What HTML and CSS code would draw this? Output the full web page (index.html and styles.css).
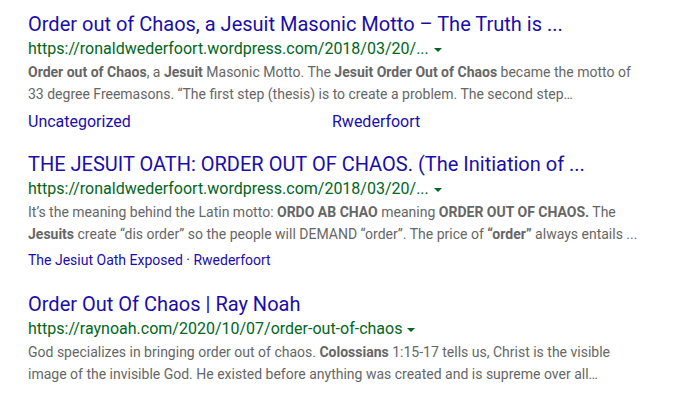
FILE: index.html
```html
<!DOCTYPE html>
<html>
<head>
<meta charset="utf-8">
<link rel="stylesheet" href="styles.css">
</head>
<body>
<div class="results">
  <div class="result r1">
    <h3 class="title">Order out of Chaos, a Jesuit Masonic Motto – The Truth is ...</h3>
    <div class="url">https://ronaldwederfoort.wordpress.com/2018/03/20/...<span class="arrow"></span></div>
    <div class="snippet"><b>Order out of Chaos</b>, a <b>Jesuit</b> Masonic Motto. The <b>Jesuit Order Out of Chaos</b> became the motto of<br>33 degree Freemasons. “The first step (thesis) is to create a problem. The second step…</div>
    <div class="cats">
      <a class="cat">Uncategorized</a>
      <a class="cat">Rwederfoort</a>
    </div>
  </div>
  <div class="result r2">
    <h3 class="title">THE JESUIT OATH: ORDER OUT OF CHAOS. (The Initiation of ...</h3>
    <div class="url">https://ronaldwederfoort.wordpress.com/2018/03/20/...<span class="arrow"></span></div>
    <div class="snippet">It’s the meaning behind the Latin motto: <b>ORDO AB CHAO</b> meaning <b>ORDER OUT OF CHAOS.</b> The<br><b>Jesuits</b> create “dis order” so the people will DEMAND “order”. The price of <b>“order”</b> always entails ...</div>
    <div class="sitelinks"><a>The Jesiut Oath Exposed</a> · <a>Rwederfoort</a></div>
  </div>
  <div class="result r3">
    <h3 class="title">Order Out Of Chaos | Ray Noah</h3>
    <div class="url">https://raynoah.com/2020/10/07/order-out-of-chaos<span class="arrow"></span></div>
    <div class="snippet">God specializes in bringing order out of chaos. <b>Colossians</b> 1:15-17 tells us, Christ is the visible<br>image of the invisible God. He existed before anything was created and is supreme over all…</div>
  </div>
</div>
</body>
</html>
```
FILE: styles.css
```css
html, body {
  margin: 0;
  padding: 0;
  background: #fff;
}
body {
  font-family: Roboto, "Liberation Sans", Arial, sans-serif;
}
.results {
  padding: 12px 0 0 28px;
  width: 645px;
}
.result {
  display: flex;
  flex-direction: column;
}
.r2 { margin-top: 19px; }
.r3 { margin-top: 22px; }
.title {
  margin: 0;
  font-size: 20px;
  font-weight: 400;
  line-height: 24px;
  color: #1a0dab;
  white-space: nowrap;
}
.url {
  margin-top: 3px;
  font-size: 16px;
  line-height: 20px;
  color: #006621;
  white-space: nowrap;
  display: flex;
  align-items: center;
}
.arrow {
  display: inline-block;
  width: 0;
  height: 0;
  margin-left: 5px;
  margin-top: 2px;
  border-top: 4px solid #006621;
  border-left: 4px solid transparent;
  border-right: 4px solid transparent;
}
.snippet {
  margin-top: 2px;
  font-size: 14px;
  line-height: 22px;
  color: #666;
  white-space: nowrap;
}
.snippet b {
  color: #666;
  font-weight: 700;
}
.cats {
  margin-top: 6px;
  display: grid;
  grid-template-columns: 304px auto;
  font-size: 16px;
  line-height: 22px;
}
.cat {
  color: #1a0dab;
}
.sitelinks {
  margin-top: 5px;
  font-size: 14px;
  line-height: 20px;
  color: #1a0dab;
}
.sitelinks a {
  color: #1a0dab;
}
```
